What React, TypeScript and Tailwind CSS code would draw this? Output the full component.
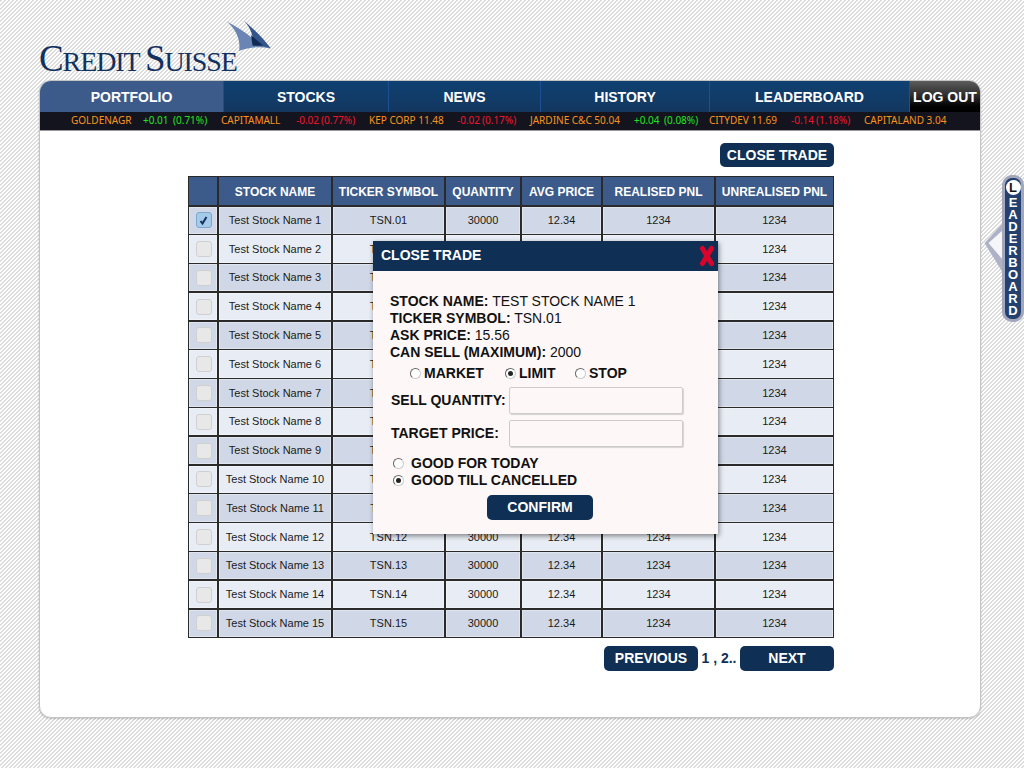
const navItems = [
  { label: 'PORTFOLIO', w: 'w-[184px]', active: true },
  { label: 'STOCKS', w: 'w-[165px]' },
  { label: 'NEWS', w: 'w-[152px]' },
  { label: 'HISTORY', w: 'w-[169px]' },
  { label: 'LEADERBOARD', w: 'w-[200px]' },
];

const ticker = [
  { text: 'GOLDENAGR', color: 'text-[#f7931e]', w: 'w-[72px]' },
  { text: '+0.01', color: 'text-[#22e322]', w: 'w-[30px]' },
  { text: '(0.71%)', color: 'text-[#22e322]', w: 'w-[48px]' },
  { text: 'CAPITAMALL', color: 'text-[#f7931e]', w: 'w-[75px]' },
  { text: '-0.02', color: 'text-[#f0142d]', w: 'w-[25px]' },
  { text: '(0.77%)', color: 'text-[#f0142d]', w: 'w-[48px]' },
  { text: 'KEP CORP 11.48', color: 'text-[#f7931e]', w: 'w-[88px]' },
  { text: '-0.02', color: 'text-[#f0142d]', w: 'w-[25px]' },
  { text: '(0.17%)', color: 'text-[#f0142d]', w: 'w-[48px]' },
  { text: 'JARDINE C&C 50.04', color: 'text-[#f7931e]', w: 'w-[104px]' },
  { text: '+0.04', color: 'text-[#22e322]', w: 'w-[30px]' },
  { text: '(0.08%)', color: 'text-[#22e322]', w: 'w-[45px]' },
  { text: 'CITYDEV 11.69', color: 'text-[#f7931e]', w: 'w-[82px]' },
  { text: '-0.14', color: 'text-[#f0142d]', w: 'w-[25px]' },
  { text: '(1.18%)', color: 'text-[#f0142d]', w: 'w-[48px]' },
  { text: 'CAPITALAND 3.04', color: 'text-[#f7931e]', w: 'w-[90px]' },
];

const headers = ['', 'STOCK NAME', 'TICKER SYMBOL', 'QUANTITY', 'AVG PRICE', 'REALISED PNL', 'UNREALISED PNL'];
const gridCols = 'grid grid-cols-[28px_112px_111px_74px_79px_111px_117px] gap-x-[2px]';

const rows = Array.from({ length: 15 }, (_, i) => ({
  name: `Test Stock Name ${i + 1}`,
  ticker: `TSN.${String(i + 1).padStart(2, '0')}`,
}));

function Radio({ on }: { on?: boolean }) {
  return (
    <span className="flex h-[11px] w-[11px] shrink-0 items-center justify-center rounded-full border border-[#666] border-r-[#ccc] border-b-[#ccc] bg-white">
      {on && <span className="h-[5px] w-[5px] rounded-full bg-[#222]" />}
    </span>
  );
}

function DarkButton({ label, className }: { label: string; className: string }) {
  return (
    <button className={`flex items-center justify-center rounded-[5px] bg-[#0f3054] text-[14px] font-bold text-white ${className}`}>
      {label}
    </button>
  );
}

function Logo() {
  return (
    <div className="relative h-[80px] w-[240px] shrink-0">
      <svg className="absolute left-[182px] top-[18px]" width="52" height="38" viewBox="0 0 52 38">
        <path d="M4.700 3.500 C14 8 23 14 30 20 L48 30.500 C38 28 27 29 17 33 C19 22 14 11 4.700 3.500 Z" fill="#6a85b3" />
        <path d="M22 3 C31 10 42 21 49 30.500 C42 28 36 27.500 31 28 C32 19 29 10 22 3 Z" fill="#34548c" />
        <path d="M29 17 L41 27.500 L30.500 27.500 Z" fill="#0f2a55" />
      </svg>
      <div className="absolute left-[-1px] top-[38px] whitespace-nowrap font-['Liberation_Serif',serif] tracking-[-1.100px] text-[#12315f]">
        <span className="text-[37px] leading-[42px]">C</span>
        <span className="text-[28px] leading-[42px]">REDIT </span>
        <span className="text-[37px] leading-[42px]">S</span>
        <span className="text-[28px] leading-[42px]">UISSE</span>
      </div>
    </div>
  );
}

function Modal() {
  return (
    <div className="absolute left-[333px] top-[160px] w-[345px] bg-[#fdf8f7] text-[#111] shadow-[1px_2px_5px_rgba(0,0,0,0.45)]">
      <div className="flex h-[30px] items-center justify-between bg-[#0f3054] pb-[2px] pl-[8px] pr-[3px] text-[14px] font-bold text-white">
        <span>CLOSE TRADE</span>
        <svg className="mt-[2px]" width="16" height="22" viewBox="0 0 16 22">
          <path d="M3.500 3.500 L12.500 18.500 M12.500 3.500 L3.500 18.500" fill="none" stroke="#d9042b" strokeWidth="5" strokeLinecap="round" />
        </svg>
      </div>
      <div className="px-[17px] pt-[22px] text-[14px] leading-[17px]">
        <p><b>STOCK NAME:</b> TEST STOCK NAME 1</p>
        <p><b>TICKER SYMBOL:</b> TSN.01</p>
        <p><b>ASK PRICE:</b> 15.56</p>
        <p><b>CAN SELL (MAXIMUM):</b> 2000</p>
        <div className="mt-[4px] flex h-[17px] items-center pl-[20px] font-bold">
          <label className="flex w-[95px] items-center gap-[3px]"><Radio />MARKET</label>
          <label className="flex w-[70px] items-center gap-[3px]"><Radio on />LIMIT</label>
          <label className="flex items-center gap-[3px]"><Radio />STOP</label>
        </div>
        <div className="mt-[5px] flex items-center font-bold">
          <span className="w-[119px] pl-[1px]">SELL QUANTITY:</span>
          <input className="h-[27px] w-[174px] rounded-[2px] border border-[#ccc] bg-[#fdf8f7] shadow-[1px_1px_1px_rgba(0,0,0,0.15)]" />
        </div>
        <div className="mt-[6px] flex items-center font-bold">
          <span className="w-[119px] pl-[1px]">TARGET PRICE:</span>
          <input className="h-[27px] w-[174px] rounded-[2px] border border-[#ccc] bg-[#fdf8f7] shadow-[1px_1px_1px_rgba(0,0,0,0.15)]" />
        </div>
        <div className="mt-[8px] font-bold">
          <label className="flex items-center gap-[7px] pl-[3px]"><Radio />GOOD FOR TODAY</label>
          <label className="flex items-center gap-[7px] pl-[3px]"><Radio on />GOOD TILL CANCELLED</label>
        </div>
        <div className="flex justify-center pb-[14px] pr-[11px] pt-[6px]">
          <DarkButton label="CONFIRM" className="h-[25px] w-[106px]" />
        </div>
      </div>
    </div>
  );
}

function LeaderboardTab() {
  return (
    <div className="absolute right-0 top-[175px] flex items-start">
      <svg className="mr-[-1px] mt-[47px]" width="19" height="52" viewBox="0 0 19 52">
        <path d="M19 1 L0.500 21 L19 51 Z" fill="#aeb2c6" />
        <path d="M19 8 L4.500 21 L19 38 Z" fill="#f6f6f8" />
      </svg>
      <div className="flex h-[147px] w-[22px] flex-col items-center rounded-[10px] border-[3px] border-[#a3a7bc] bg-[#23406f] pt-[2px] text-[13px] font-bold leading-[12px] text-white">
        <span className="mb-[2px] flex h-[15px] w-[15px] shrink-0 items-center justify-center rounded-full bg-white text-[#111]">L</span>
        {'EADERBOARD'.split('').map((c, i) => (
          <span key={i}>{c}</span>
        ))}
      </div>
    </div>
  );
}

export default function App() {
  return (
    <div className="relative h-[768px] w-[1024px] overflow-hidden bg-[linear-gradient(135deg,#dcdcdc_25%,#ffffff_25%,#ffffff_50%,#dcdcdc_50%,#dcdcdc_75%,#ffffff_75%)] bg-[length:4px_4px] font-['Liberation_Sans',sans-serif]">
      <div className="pl-[40px]">
        <Logo />
      </div>

      <div className="relative ml-[39px] h-[638px] w-[942px] rounded-[12px] border border-[#c4c4c4] bg-white shadow-[0_1px_2px_rgba(0,0,0,0.2)]">
        <nav className="flex h-[31px] overflow-hidden rounded-t-[11px] text-[14px] font-bold text-white">
          {navItems.map((n) => (
            <div
              key={n.label}
              className={`flex items-center justify-center border-r border-[#1c4f94] pt-[1px] ${n.w} ${
                n.active ? 'bg-[#3c5b8a]' : 'bg-gradient-to-b from-[#0e4172] to-[#13375f]'
              }`}
            >
              {n.label}
            </div>
          ))}
          <div className="flex flex-1 items-center justify-center bg-gradient-to-b from-[#5c5c5c] via-[#2a2a2a] to-black pt-[1px]">
            LOG OUT
          </div>
        </nav>

        <div className="flex h-[19px] items-center whitespace-nowrap border-b border-[#999] bg-[#14141f] pb-[1px] pl-[31px] font-['Noto_Sans',sans-serif] text-[10px]">
          {ticker.map((t, i) => (
            <span key={i} className={`${t.color} ${t.w}`}>{t.text}</span>
          ))}
        </div>

        <div className="flex flex-col items-end pl-[148px] pr-[146px] pt-[12px]">
          <DarkButton label="CLOSE TRADE" className="h-[24px] w-[114px]" />

          <div className="mt-[9px] w-[646px] border border-[#2a2a2a] bg-[#2a2a2a]">
            <div className={`${gridCols} h-[28px]`}>
              {headers.map((h, i) => (
                <div key={i} className="flex items-center justify-center bg-[#3c5b8a] pt-[1px] text-[12px] font-bold text-white">
                  {h}
                </div>
              ))}
            </div>
            {rows.map((r, i) => {
              const bg = i % 2 === 0 ? 'bg-[#d0d8e7]' : 'bg-[#e8edf5]';
              const cells = [r.name, r.ticker, '30000', '12.34', '1234', '1234'];
              return (
                <div key={r.name} className={`${gridCols} mt-[1.500px] h-[27.300px]`}>
                  <div className={`flex items-center justify-center pl-[1px] shadow-[inset_0_0_0_1px_rgba(255,255,255,0.35)] ${bg}`}>
                    {i === 0 ? (
                      <span className="flex h-[16px] w-[16px] items-center justify-center rounded-[3px] border border-[#7fa6cc] bg-[#a5cbeb]">
                        <svg width="11" height="11" viewBox="0 0 11 11">
                          <path d="M2.500 6 L4.500 8.500 L8.500 2" fill="none" stroke="#12305c" strokeWidth="2" />
                        </svg>
                      </span>
                    ) : (
                      <span className="h-[16px] w-[16px] rounded-[3px] border border-[#d0d0d0] bg-[#e8e8e8]" />
                    )}
                  </div>
                  {cells.map((c, j) => (
                    <div key={j} className={`flex items-center justify-center text-[11px] text-[#1a1a1a] shadow-[inset_0_0_0_1px_rgba(255,255,255,0.35)] ${bg}`}>
                      {c}
                    </div>
                  ))}
                </div>
              );
            })}
          </div>

          <div className="mt-[8px] flex h-[25px] items-center">
            <DarkButton label="PREVIOUS" className="h-[25px] w-[94px]" />
            <span className="w-[42px] text-center text-[14px] font-bold text-[#0f3054]">1 , 2..</span>
            <DarkButton label="NEXT" className="h-[25px] w-[94px]" />
          </div>
        </div>

        <Modal />
      </div>

      <LeaderboardTab />
    </div>
  );
}
